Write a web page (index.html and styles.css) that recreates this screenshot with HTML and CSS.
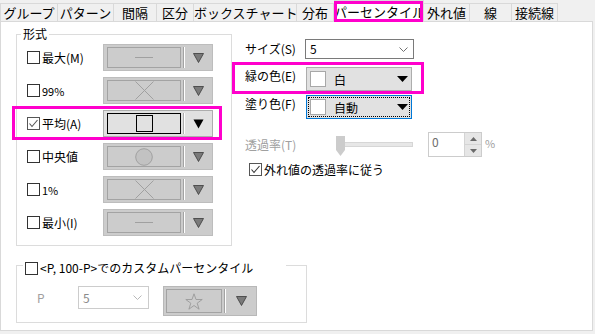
FILE: index.html
```html
<!DOCTYPE html>
<html lang="ja">
<head>
<meta charset="utf-8">
<link rel="stylesheet" href="styles.css">
</head>
<body>
<div class="tabs">
  <div class="tab w58 first">グループ</div>
  <div class="tab w56">パターン</div>
  <div class="tab w43">間隔</div>
  <div class="tab w37">区分</div>
  <div class="tab w103">ボックスチャート</div>
  <div class="tab w37">分布</div>
  <div class="tab w90 active">パーセンタイル</div>
  <div class="tab w46">外れ値</div>
  <div class="tab w42">線</div>
  <div class="tab w46">接続線</div>
</div>
<div class="panel">
  <div class="top">
    <div class="group fmt">
      <div class="gtitle">形式</div>
      <div class="rows">
        <div class="row">
          <label class="opt"><span class="cb"></span>最大(M)</label>
          <div class="picker">
            <span class="sym"><svg width="18" height="3" viewBox="0 0 18 3"><line x1="0" y1="1.5" x2="18" y2="1.5" stroke="#a0a0a0" stroke-width="1"/></svg></span>
            <span class="sep"></span>
            <span class="arr"><svg width="11" height="10" viewBox="0 0 11 10"><polygon points="0.5,0.5 10.5,0.5 5.5,9.5" fill="#7a7a7a" stroke="#3a3a3a" stroke-width="0.8"/></svg></span>
          </div>
        </div>
        <div class="row">
          <label class="opt"><span class="cb"></span><span class="small">99%</span></label>
          <div class="picker">
            <span class="sym"><svg width="19" height="19" viewBox="0 0 19 19"><path d="M0.5 0.5 L18.5 18.5 M18.5 0.5 L0.5 18.5" stroke="#a0a0a0" stroke-width="1" fill="none"/></svg></span>
            <span class="sep"></span>
            <span class="arr"><svg width="11" height="10" viewBox="0 0 11 10"><polygon points="0.5,0.5 10.5,0.5 5.5,9.5" fill="#7a7a7a" stroke="#3a3a3a" stroke-width="0.8"/></svg></span>
          </div>
        </div>
        <div class="row hl">
          <label class="opt"><span class="cb on"><svg width="11" height="11" viewBox="0 0 11 11"><path d="M1.5 5.5 L4 8.5 L9.5 2" stroke="#555" stroke-width="1.1" fill="none"/></svg></span>平均(A)</label>
          <div class="picker on">
            <span class="sym"><svg width="17" height="17" viewBox="0 0 17 17"><rect x="0.5" y="0.5" width="16" height="16" fill="none" stroke="#000" stroke-width="1"/></svg></span>
            <span class="sep"></span>
            <span class="arr"><svg width="11" height="10" viewBox="0 0 11 10"><polygon points="0.5,0.5 10.5,0.5 5.5,9.5" fill="#000"/></svg></span>
          </div>
        </div>
        <div class="row">
          <label class="opt"><span class="cb"></span>中央値</label>
          <div class="picker">
            <span class="sym"><svg width="18" height="18" viewBox="0 0 18 18"><circle cx="9" cy="9" r="8.3" fill="#c2c2c2" stroke="#a0a0a0" stroke-width="1"/></svg></span>
            <span class="sep"></span>
            <span class="arr"><svg width="11" height="10" viewBox="0 0 11 10"><polygon points="0.5,0.5 10.5,0.5 5.5,9.5" fill="#7a7a7a" stroke="#3a3a3a" stroke-width="0.8"/></svg></span>
          </div>
        </div>
        <div class="row">
          <label class="opt"><span class="cb"></span><span class="small">1%</span></label>
          <div class="picker">
            <span class="sym"><svg width="19" height="19" viewBox="0 0 19 19"><path d="M0.5 0.5 L18.5 18.5 M18.5 0.5 L0.5 18.5" stroke="#a0a0a0" stroke-width="1" fill="none"/></svg></span>
            <span class="sep"></span>
            <span class="arr"><svg width="11" height="10" viewBox="0 0 11 10"><polygon points="0.5,0.5 10.5,0.5 5.5,9.5" fill="#7a7a7a" stroke="#3a3a3a" stroke-width="0.8"/></svg></span>
          </div>
        </div>
        <div class="row">
          <label class="opt"><span class="cb"></span>最小(I)</label>
          <div class="picker">
            <span class="sym"><svg width="18" height="3" viewBox="0 0 18 3"><line x1="0" y1="1.5" x2="18" y2="1.5" stroke="#a0a0a0" stroke-width="1"/></svg></span>
            <span class="sep"></span>
            <span class="arr"><svg width="11" height="10" viewBox="0 0 11 10"><polygon points="0.5,0.5 10.5,0.5 5.5,9.5" fill="#7a7a7a" stroke="#3a3a3a" stroke-width="0.8"/></svg></span>
          </div>
        </div>
      </div>
    </div>
    <div class="side">
      <div class="srow">
        <span class="slabel">サイズ(S)</span>
        <div class="select"><span>5</span><svg width="9" height="5" viewBox="0 0 9 5"><path d="M0.5 0.5 L4.5 4.5 L8.5 0.5" stroke="#707070" stroke-width="1" fill="none"/></svg></div>
      </div>
      <div class="srow crow hl2">
        <span class="slabel tall">緑の色(E)</span>
        <div class="cdrop"><span class="swatch"></span><span class="ctext">白</span><svg class="carr" width="11" height="6" viewBox="0 0 11 6"><polygon points="0,0 11,0 5.5,6" fill="#000"/></svg></div>
      </div>
      <div class="srow crow2">
        <span class="slabel tall">塗り色(F)</span>
        <div class="cdrop focus"><span class="swatch"></span><span class="ctext">自動</span><svg class="carr" width="11" height="6" viewBox="0 0 11 6"><polygon points="0,0 11,0 5.5,6" fill="#000"/></svg></div>
      </div>
      <div class="srow trow">
        <span class="slabel dim">透過率(T)</span>
        <svg class="thumb" width="9" height="20" viewBox="0 0 9 20"><polygon points="0,0 9,0 9,14 4.5,20 0,14" fill="#cccccc"/></svg>
        <span class="track"></span>
        <div class="spin">
          <span class="spinval">0</span>
          <span class="spinbtns">
            <span class="sb"><svg width="7" height="4" viewBox="0 0 7 4"><polygon points="0,4 7,4 3.5,0" fill="#6a6a6a"/></svg></span>
            <span class="sb"><svg width="7" height="4" viewBox="0 0 7 4"><polygon points="0,0 7,0 3.5,4" fill="#6a6a6a"/></svg></span>
          </span>
        </div>
        <span class="pct">%</span>
      </div>
      <label class="follow"><span class="cb on"><svg width="11" height="11" viewBox="0 0 11 11"><path d="M1.5 5.5 L4 8.5 L9.5 2" stroke="#333" stroke-width="1.1" fill="none"/></svg></span>外れ値の透過率に従う</label>
    </div>
  </div>
  <div class="group custom">
    <label class="gtitle ctitle"><span class="cb"></span>&lt;P, 100-P&gt;でのカスタムパーセンタイル</label>
    <div class="prow">
      <span class="plabel">P</span>
      <div class="select dis"><span>5</span><svg width="9" height="5" viewBox="0 0 9 5"><path d="M0.5 0.5 L4.5 4.5 L8.5 0.5" stroke="#b8b8b8" stroke-width="1" fill="none"/></svg></div>
      <div class="picker star">
        <span class="sym"><svg width="18" height="17" viewBox="0 0 18 17"><polygon points="9,0.8 11,6.5 17.2,6.5 12.2,10.2 14.1,16.2 9,12.5 3.9,16.2 5.8,10.2 0.8,6.5 7,6.5" fill="none" stroke="#9a9a9a" stroke-width="0.9"/></svg></span>
        <span class="sep"></span>
        <span class="arr"><svg width="11" height="10" viewBox="0 0 11 10"><polygon points="0.5,0.5 10.5,0.5 5.5,9.5" fill="#7a7a7a" stroke="#3a3a3a" stroke-width="0.8"/></svg></span>
      </div>
    </div>
  </div>
</div>
</body>
</html>
```
FILE: styles.css
```css
html, body {
  margin: 0;
  padding: 0;
}
body {
  width: 595px;
  height: 334px;
  overflow: hidden;
  background: #f0f0f0;
  font-family: "Noto Sans CJK JP", "Noto Sans", sans-serif;
  font-size: 12px;
  color: #000;
}

/* tabs */
.tabs {
  display: flex;
  align-items: flex-end;
  height: 21px;
  position: relative;
  z-index: 2;
}
.tab {
  flex: none;
  height: 18px;
  box-sizing: border-box;
  border-top: 1px solid #d9d9d9;
  border-right: 1px solid #d9d9d9;
  background: #f0f0f0;
  font-size: 13px;
  line-height: 17px;
  text-align: center;
  white-space: nowrap;
  overflow: hidden;
}
.tab.first { border-left: 1px solid #d9d9d9; }
.w58 { width: 58px; }
.w56 { width: 56px; }
.w43 { width: 43px; }
.w37 { width: 37px; }
.w103 { width: 103px; }
.w90 { width: 90px; }
.w46 { width: 46px; }
.w42 { width: 42px; }
.tab.active {
  height: 22px;
  margin-bottom: -1px;
  background: #fff;
  position: relative;
  line-height: 22px;
}
.tab.active::after {
  content: "";
  position: absolute;
  inset: 0;
  border: 3px solid #ff00cc;
  box-sizing: border-box;
}

/* panel */
.panel {
  width: 593px;
  height: 310px;
  box-sizing: border-box;
  border: 1px solid #d9d9d9;
  background: #fff;
  padding: 12px 0 0 15px;
}
.top {
  display: flex;
  align-items: flex-start;
}
.group {
  border: 1px solid #dcdcdc;
  box-sizing: border-box;
}
.gtitle {
  display: block;
  width: max-content;
  margin-top: -8px;
  margin-left: -6px;
  padding: 0 2px;
  line-height: 14px;
  background: #fff;
}
.fmt {
  width: 216px;
  padding: 0 0 9px 10px;
}
.rows {
  display: flex;
  flex-direction: column;
  align-items: flex-start;
  gap: 6px;
  padding-top: 3px;
}
.row {
  display: flex;
  align-items: center;
  height: 27px;
}
.row.hl, .hl2 { position: relative; }
.row.hl::after {
  content: "";
  position: absolute;
  left: -15px;
  right: -9px;
  top: -4px;
  bottom: -3px;
  border: 3px solid #ff00cc;
}
.opt {
  width: 76px;
  flex: none;
  display: flex;
  align-items: center;
  gap: 2px;
  white-space: nowrap;
}
.small { font-size: 11px; }
.cb {
  flex: none;
  width: 13px;
  height: 13px;
  box-sizing: border-box;
  border: 1px solid #333;
  background: #fff;
  display: flex;
  align-items: center;
  justify-content: center;
}
.cb.on { border-color: #555; }

/* symbol picker */
.picker {
  flex: none;
  width: 110px;
  height: 27px;
  box-sizing: border-box;
  border: 1px solid #bdbdbd;
  background: #cccccc;
  display: flex;
  align-items: center;
  padding-left: 3px;
}
.sym {
  flex: none;
  width: 74px;
  height: 21px;
  box-sizing: border-box;
  border: 1px solid #a3a3a3;
  display: flex;
  align-items: center;
  justify-content: center;
}
.sym svg { display: block; }
.sep {
  flex: none;
  width: 1px;
  height: 21px;
  margin-left: 2px;
  background: #a3a3a3;
  border-right: 1px solid #fff;
}
.arr {
  flex: 1;
  display: flex;
  align-items: center;
  justify-content: center;
}
.arr svg { display: block; }
.picker.on {
  background: #e1e1e1;
  border-color: #adadad;
}
.picker.on .sym { border-color: #000; }
.picker.on .sep { background: #adadad; }

/* right side */
.side {
  margin-left: 13px;
  padding-top: 5px;
  display: flex;
  flex-direction: column;
  align-items: flex-start;
}
.srow {
  display: flex;
  align-items: flex-start;
}
.slabel {
  flex: none;
  width: 60px;
  line-height: 20px;
  white-space: nowrap;
}
.slabel.tall { line-height: 18px; }
.dim { color: #a0a0a0; }
.select {
  flex: none;
  width: 109px;
  height: 20px;
  box-sizing: border-box;
  border: 1px solid #7a7a7a;
  background: #fff;
  display: flex;
  align-items: center;
  justify-content: space-between;
  padding: 0 5px 0 4px;
  line-height: 16px;
}
.select svg { display: block; }
.crow { margin-top: 8px; }
.crow2 { margin-top: 4px; }
.hl2::after {
  content: "";
  position: absolute;
  left: -13px;
  right: -12px;
  top: -5px;
  bottom: -3px;
  border: 3px solid #ff00cc;
}
.cdrop {
  flex: none;
  margin-left: 1px;
  width: 106px;
  height: 24px;
  box-sizing: border-box;
  border: 1px solid #adadad;
  background: #e1e1e1;
  display: flex;
  align-items: center;
  padding: 0 3px 0 3px;
}
.cdrop.focus {
  border-color: #0078d7;
  outline: 1px dotted #000;
  outline-offset: -3px;
}
.swatch {
  flex: none;
  width: 16px;
  height: 16px;
  box-sizing: border-box;
  border: 1px solid #a8a8a8;
  background: #fff;
}
.ctext { margin-left: 8px; }
.carr { margin-left: auto; display: block; }
.trow {
  margin-top: 13px;
  align-items: center;
  height: 25px;
}
.thumb {
  flex: none;
  display: block;
  margin-left: 31px;
  margin-top: 2px;
}
.track {
  flex: none;
  width: 68px;
  height: 5px;
  box-sizing: border-box;
  background: #e7e7e7;
  border: 1px solid #d6d6d6;
  border-left: none;
}
.spin {
  flex: none;
  margin-left: 15px;
  width: 54px;
  height: 25px;
  box-sizing: border-box;
  border: 1px solid #cccccc;
  display: flex;
  justify-content: space-between;
}
.spinval {
  color: #6d6d6d;
  padding: 2px 0 0 3px;
  line-height: 14px;
}
.spinbtns {
  width: 17px;
  display: flex;
  flex-direction: column;
}
.sb {
  flex: 1;
  background: #e6e6e6;
  border-left: 1px solid #d4d4d4;
  display: flex;
  align-items: center;
  justify-content: center;
}
.sb + .sb { border-top: 1px solid #d4d4d4; }
.sb svg { display: block; }
.pct {
  margin-left: 3px;
  color: #a0a0a0;
  font-size: 11px;
  line-height: 14px;
  align-self: flex-start;
  padding-top: 4px;
}
.follow {
  display: flex;
  align-items: center;
  gap: 2px;
  margin-top: 3px;
  margin-left: 4px;
  height: 18px;
  white-space: nowrap;
}

/* custom group */
.custom {
  width: 291px;
  margin-top: 19px;
  padding: 0 0 6px 20px;
}
.ctitle {
  display: flex;
  align-items: center;
  gap: 2px;
  width: 261px;
  margin-left: -14px;
  margin-top: -6px;
  line-height: 16px;
  height: 16px;
  padding: 0 0 0 2px;
  white-space: nowrap;
}
.prow {
  display: flex;
  align-items: flex-start;
  margin-top: 10px;
}
.plabel {
  flex: none;
  width: 41px;
  line-height: 23px;
  color: #a0a0a0;
}
.select.dis {
  width: 71px;
  height: 23px;
  border-color: #cccccc;
  color: #8a8a8a;
  padding: 0 6px 0 4px;
}
.picker.star {
  width: 94px;
  height: 30px;
  margin-left: 14px;
  padding-left: 2px;
  border-color: #b8b8b8;
}
.picker.star .sym {
  width: 56px;
  height: 24px;
}
.picker.star .sep {
  height: 24px;
  margin-left: 2px;
}
```
